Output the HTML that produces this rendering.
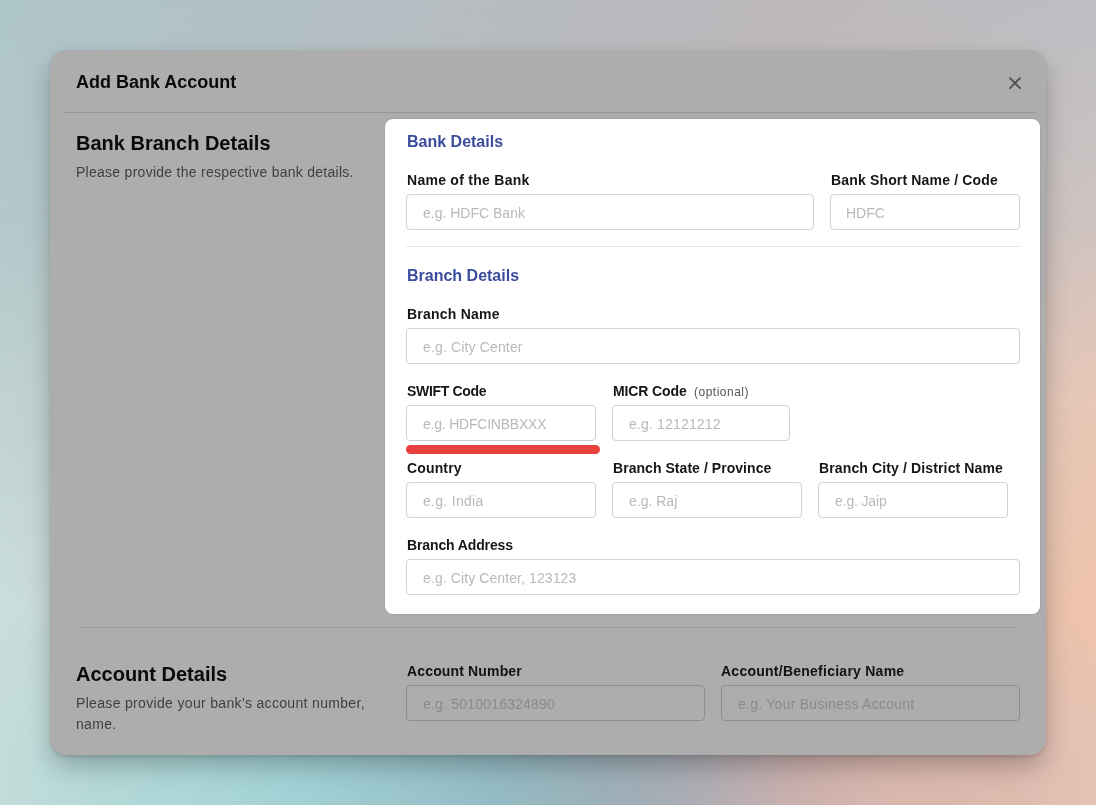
<!DOCTYPE html>
<html><head><meta charset="utf-8"><style>
html,body{margin:0;padding:0;}
body{width:1096px;height:805px;position:relative;overflow:hidden;font-family:"Liberation Sans",sans-serif;}
.bg{position:absolute;left:0;top:0;width:1096px;height:805px;}
.r{position:absolute;left:0;top:0;width:1096px;height:805px;}
.modal{position:absolute;left:50px;top:50px;width:996px;height:705px;background:#adadad;border-radius:16px;box-shadow:0 2px 3px rgba(0,0,0,0.1),0 12px 26px -2px rgba(0,0,0,0.27);}
.t{position:absolute;white-space:nowrap;line-height:1;-webkit-font-smoothing:antialiased;}
.b{position:absolute;}
</style></head><body>
<div class="bg">
<div class="r" style="background:linear-gradient(90deg,#aec6cb 0px,#b2c0c6 280px,#b8bbc0 550px,#bdb8bb 810px,#bdbec3 1096px);"></div>
<div class="r" style="background:linear-gradient(90deg,#b3c8cb 0px,#bbbbbb 548px,#cdc3c1 1096px);-webkit-mask-image:linear-gradient(180deg,transparent 0px,#000 210px);"></div>
<div class="r" style="background:linear-gradient(90deg,#c0d2d1 0px,#bbbbbb 548px,#e8c7b6 1096px);-webkit-mask-image:linear-gradient(180deg,transparent 210px,#000 405px);"></div>
<div class="r" style="background:linear-gradient(90deg,#cadedb 0px,#bbbbbb 548px,#efc3ab 1096px);-webkit-mask-image:linear-gradient(180deg,transparent 405px,#000 610px);"></div>
<div class="r" style="background:linear-gradient(90deg,#c2dcd9 0px,#b4d8d8 100px,#abd6d7 200px,#a2d1d5 300px,#9ac6cc 400px,#94bac3 500px,#9cb0b9 600px,#a3adb6 650px,#aeadb4 700px,#bdaeb1 750px,#cbb0ad 800px,#d5b5ad 860px,#d9b7ad 900px,#ddb9ae 1000px,#e4c3b6 1096px);-webkit-mask-image:linear-gradient(180deg,transparent 610px,#000 755px);"></div>
</div>
<div class="modal"></div>
<div class="fg" style="position:absolute;left:0;top:0;width:1096px;height:805px;will-change:transform;">
<div class="b" style="left:63px;top:112px;width:974px;height:1px;background:#979797;"></div><div class="b" style="left:385px;top:119px;width:655px;height:495px;background:#fff;border-radius:8px;box-shadow:0 0 2px rgba(0,0,0,0.18);"></div><div class="b" style="left:406px;top:194px;width:408px;height:36px;background:#fff;border:1px solid #d2d2d2;border-radius:4px;box-sizing:border-box;"></div><div class="b" style="left:830px;top:194px;width:190px;height:36px;background:#fff;border:1px solid #d2d2d2;border-radius:4px;box-sizing:border-box;"></div><div class="b" style="left:406px;top:246px;width:614px;height:1px;background:#e6e6e6;"></div><div class="b" style="left:406px;top:328px;width:614px;height:36px;background:#fff;border:1px solid #d2d2d2;border-radius:4px;box-sizing:border-box;"></div><div class="b" style="left:406px;top:405px;width:190px;height:36px;background:#fff;border:1px solid #d2d2d2;border-radius:4px;box-sizing:border-box;"></div><div class="b" style="left:612px;top:405px;width:178px;height:36px;background:#fff;border:1px solid #d2d2d2;border-radius:4px;box-sizing:border-box;"></div><div class="b" style="left:406px;top:445px;width:194px;height:9px;background:#e8403d;border-radius:4.5px;"></div><div class="b" style="left:406px;top:482px;width:190px;height:36px;background:#fff;border:1px solid #d2d2d2;border-radius:4px;box-sizing:border-box;"></div><div class="b" style="left:612px;top:482px;width:190px;height:36px;background:#fff;border:1px solid #d2d2d2;border-radius:4px;box-sizing:border-box;"></div><div class="b" style="left:818px;top:482px;width:190px;height:36px;background:#fff;border:1px solid #d2d2d2;border-radius:4px;box-sizing:border-box;"></div><div class="b" style="left:406px;top:559px;width:614px;height:36px;background:#fff;border:1px solid #d2d2d2;border-radius:4px;box-sizing:border-box;"></div><div class="b" style="left:76px;top:627px;width:944px;height:1px;background:#a0a0a0;"></div><div class="b" style="left:406px;top:685px;width:299px;height:36px;background:transparent;border:1px solid #8e8e8e;border-radius:4px;box-sizing:border-box;"></div><div class="b" style="left:721px;top:685px;width:299px;height:36px;background:transparent;border:1px solid #8e8e8e;border-radius:4px;box-sizing:border-box;"></div>
<div class="t" style="left:76px;top:73px;font-size:18px;font-weight:700;color:#0a0a0a;">Add Bank Account</div><div class="t" style="left:76px;top:133px;font-size:20px;font-weight:700;color:#0a0a0a;">Bank Branch Details</div><div class="t" style="left:76px;top:165px;font-size:14px;font-weight:400;color:#404040;letter-spacing:0.27px;">Please provide the respective bank details.</div><div class="t" style="left:407px;top:134px;font-size:16px;font-weight:700;color:#3b4c9c;">Bank Details</div><div class="t" style="left:407px;top:173px;font-size:14px;font-weight:700;color:#161616;letter-spacing:0.27px;">Name of the Bank</div><div class="t" style="left:423px;top:206px;font-size:14px;font-weight:400;color:#b6babe;">e.g. HDFC Bank</div><div class="t" style="left:831px;top:173px;font-size:14px;font-weight:700;color:#161616;letter-spacing:0.16px;">Bank Short Name / Code</div><div class="t" style="left:846px;top:206px;font-size:14px;font-weight:400;color:#b6babe;">HDFC</div><div class="t" style="left:407px;top:268px;font-size:16px;font-weight:700;color:#3b4c9c;">Branch Details</div><div class="t" style="left:407px;top:307px;font-size:14px;font-weight:700;color:#161616;letter-spacing:0.22px;">Branch Name</div><div class="t" style="left:423px;top:340px;font-size:14px;font-weight:400;color:#b6babe;letter-spacing:0.15px;">e.g. City Center</div><div class="t" style="left:407px;top:384px;font-size:14px;font-weight:700;color:#161616;letter-spacing:-0.33px;">SWIFT Code</div><div class="t" style="left:613px;top:384px;font-size:14px;font-weight:700;color:#161616;letter-spacing:-0.12px;">MICR Code</div><div class="t" style="left:694px;top:386px;font-size:12px;font-weight:400;color:#555;letter-spacing:0.5px;">(optional)</div><div class="t" style="left:423px;top:417px;font-size:14px;font-weight:400;color:#b6babe;letter-spacing:-0.22px;">e.g. HDFCINBBXXX</div><div class="t" style="left:629px;top:417px;font-size:14px;font-weight:400;color:#b6babe;letter-spacing:0.17px;">e.g. 12121212</div><div class="t" style="left:407px;top:461px;font-size:14px;font-weight:700;color:#161616;letter-spacing:0.15px;">Country</div><div class="t" style="left:613px;top:461px;font-size:14px;font-weight:700;color:#161616;letter-spacing:0.05px;">Branch State / Province</div><div class="t" style="left:819px;top:461px;font-size:14px;font-weight:700;color:#161616;letter-spacing:0.13px;">Branch City / District Name</div><div class="t" style="left:423px;top:494px;font-size:14px;font-weight:400;color:#b6babe;letter-spacing:0.3px;">e.g. India</div><div class="t" style="left:629px;top:494px;font-size:14px;font-weight:400;color:#b6babe;">e.g. Raj</div><div class="t" style="left:835px;top:494px;font-size:14px;font-weight:400;color:#b6babe;letter-spacing:-0.15px;">e.g. Jaip</div><div class="t" style="left:407px;top:538px;font-size:14px;font-weight:700;color:#161616;letter-spacing:-0.12px;">Branch Address</div><div class="t" style="left:423px;top:571px;font-size:14px;font-weight:400;color:#b6babe;letter-spacing:0.1px;">e.g. City Center, 123123</div><div class="t" style="left:76px;top:664px;font-size:20px;font-weight:700;color:#0a0a0a;">Account Details</div><div class="t" style="left:76px;top:696px;font-size:14px;font-weight:400;color:#404040;letter-spacing:0.33px;">Please provide your bank's account number,</div><div class="t" style="left:76px;top:717px;font-size:14px;font-weight:400;color:#404040;letter-spacing:0.33px;">name.</div><div class="t" style="left:407px;top:664px;font-size:14px;font-weight:700;color:#121212;letter-spacing:0.15px;">Account Number</div><div class="t" style="left:423px;top:697px;font-size:14px;font-weight:400;color:#8a8a8a;letter-spacing:0.2px;">e.g. 5010016324890</div><div class="t" style="left:721px;top:664px;font-size:14px;font-weight:700;color:#121212;letter-spacing:0.25px;">Account/Beneficiary Name</div><div class="t" style="left:738px;top:697px;font-size:14px;font-weight:400;color:#8a8a8a;letter-spacing:0.26px;">e.g. Your Business Account</div>
<svg class="b" style="left:1008px;top:77px" width="14" height="13" viewBox="0 0 14 13"><path d="M2 1.2L12 11.2M12 1.2L2 11.2" stroke="#525252" stroke-width="1.9" stroke-linecap="round"/></svg>
</div>
</body></html>
